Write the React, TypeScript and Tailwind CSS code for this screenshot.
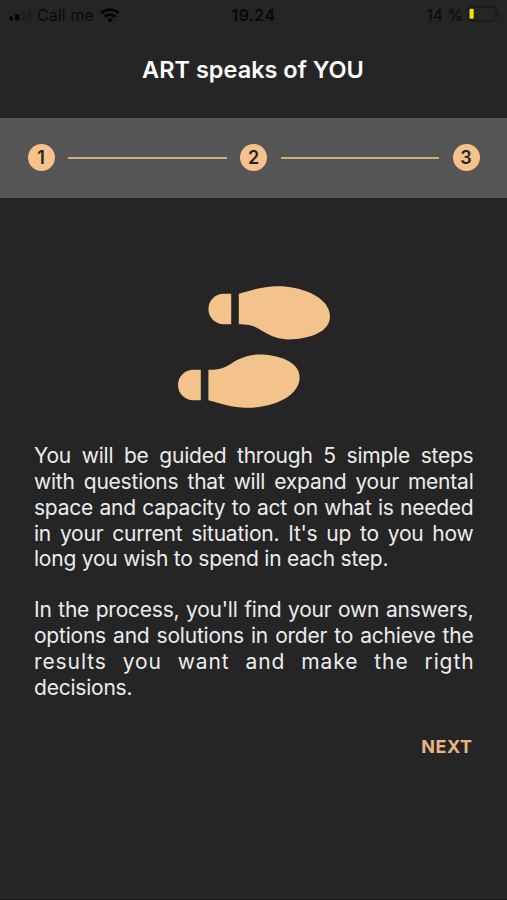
import React from 'react';
import { FaShoePrints } from 'react-icons/fa';

interface TextLine {
  text: string;
  className: string;
}

const intro: TextLine[] = [
  { text: 'You will be guided through 5 simple steps', className: 'tracking-[-0.22px] [text-align-last:justify]' },
  { text: 'with questions that will expand your mental', className: 'tracking-[-0.22px] [text-align-last:justify]' },
  { text: 'space and capacity to act on what is needed', className: 'tracking-[-0.22px] [text-align-last:justify]' },
  { text: "in your current situation. It's up to you how", className: 'tracking-[-0.22px] [text-align-last:justify]' },
  { text: 'long you wish to spend in each step.', className: 'tracking-[-0.22px]' },
];

const outcome: TextLine[] = [
  { text: "In the process, you'll find your own answers,", className: 'tracking-[-0.22px] [text-align-last:justify]' },
  { text: 'options and solutions in order to achieve the', className: 'tracking-[-0.22px] [text-align-last:justify]' },
  { text: 'results you want and make the rigth', className: 'tracking-[0.9px] -mr-[1px] [text-align-last:justify]' },
  { text: 'decisions.', className: 'tracking-[-0.22px]' },
];

const StatusBar: React.FC = () => (
  <div className="grid grid-cols-3 items-center h-[30px] pl-[9px] pr-[7px] text-base text-[#080808]">
    <div className="flex items-center">
      <svg width="24" height="12" viewBox="0 0 24 12">
        <rect x="0" y="7.5" width="4" height="4" rx="1" fill="#050505" />
        <rect x="6" y="5" width="4.5" height="6.5" rx="1" fill="#050505" />
        <rect x="12.5" y="2.5" width="4" height="9" rx="1" fill="#1e1e1e" />
        <rect x="18.5" y="0" width="4" height="11.5" rx="1" fill="#1e1e1e" />
      </svg>
      <span className="ml-[4px] tracking-[0.1px] whitespace-nowrap text-[#0b0b0b]">Call me</span>
      <svg className="ml-[6px]" width="20" height="15" viewBox="0 0 20 15" fill="none" stroke="#050505">
        <path d="M1.2 5.2a12.6 12.6 0 0 1 17.6 0" strokeWidth="2.7" />
        <path d="M4.6 8.8a7.7 7.7 0 0 1 10.8 0" strokeWidth="2.6" />
        <path d="M10 14.6 6.9 11.5a4.4 4.4 0 0 1 6.2 0Z" fill="#050505" stroke="none" />
      </svg>
    </div>
    <div className="pr-[2px] text-center font-semibold tracking-[0.4px]">19.24</div>
    <div className="flex items-center justify-end">
      <span className="tracking-[-0.1px] whitespace-nowrap">14 %</span>
      <svg className="mb-[2px] ml-[4px]" width="33" height="16" viewBox="0 0 33 16">
        <rect x="0.75" y="0.75" width="28.5" height="14" rx="4" fill="none" stroke="#191919" strokeWidth="1.3" />
        <rect x="2.5" y="2.8" width="4.2" height="10" rx="1.4" fill="#f8dc0c" />
        <path d="M31 5.5c1.8.8 1.8 4 0 4.8Z" fill="#191919" />
      </svg>
    </div>
  </div>
);

const StepDot: React.FC<{ step: number }> = ({ step }) => (
  <div className="flex items-center justify-center w-[27px] h-[27px] shrink-0 rounded-full bg-[#f6c28b] text-[18px] font-semibold text-[#252525]">
    {step}
  </div>
);

const StepLine: React.FC = () => <div className="flex-1 h-[2px] mx-[13.5px] bg-[#d2ad80]" />;

const Paragraph: React.FC<{ lines: TextLine[] }> = ({ lines }) => (
  <p>
    {lines.map((line) => (
      <span key={line.text} className={`block whitespace-nowrap ${line.className}`}>
        {line.text}{' '}
      </span>
    ))}
  </p>
);

export default function App() {
  return (
    <div className="flex flex-col w-full h-[900px] overflow-hidden bg-[#252525] border-b border-[#1c171c] font-['Inter',sans-serif]">
      <StatusBar />

      <header className="h-[87.5px] pt-[24px] pr-[1px]">
        <h1 className="text-center text-[23.5px] leading-[32px] font-semibold text-white">ART speaks of YOU</h1>
      </header>

      {/* Progress */}
      <div className="flex items-center h-[80.5px] px-[27.5px] bg-[#555555]">
        <StepDot step={1} />
        <StepLine />
        <StepDot step={2} />
        <StepLine />
        <StepDot step={3} />
      </div>

      <main className="flex flex-col pl-[34px] pr-[33.5px] pt-[88px]">
        <FaShoePrints className="self-center w-[152px] h-[122px] text-[#f4c28b]" />
        <div className="flex flex-col gap-[25px] mt-[35.3px] text-[21px] leading-[25.8px] text-[#ececec]">
          <Paragraph lines={intro} />
          <Paragraph lines={outcome} />
        </div>
        <button className="self-end mt-[34px] mr-[1px] text-[18px] leading-[26px] font-bold tracking-[0.5px] text-[#e6b782]">NEXT</button>
      </main>
    </div>
  );
}
